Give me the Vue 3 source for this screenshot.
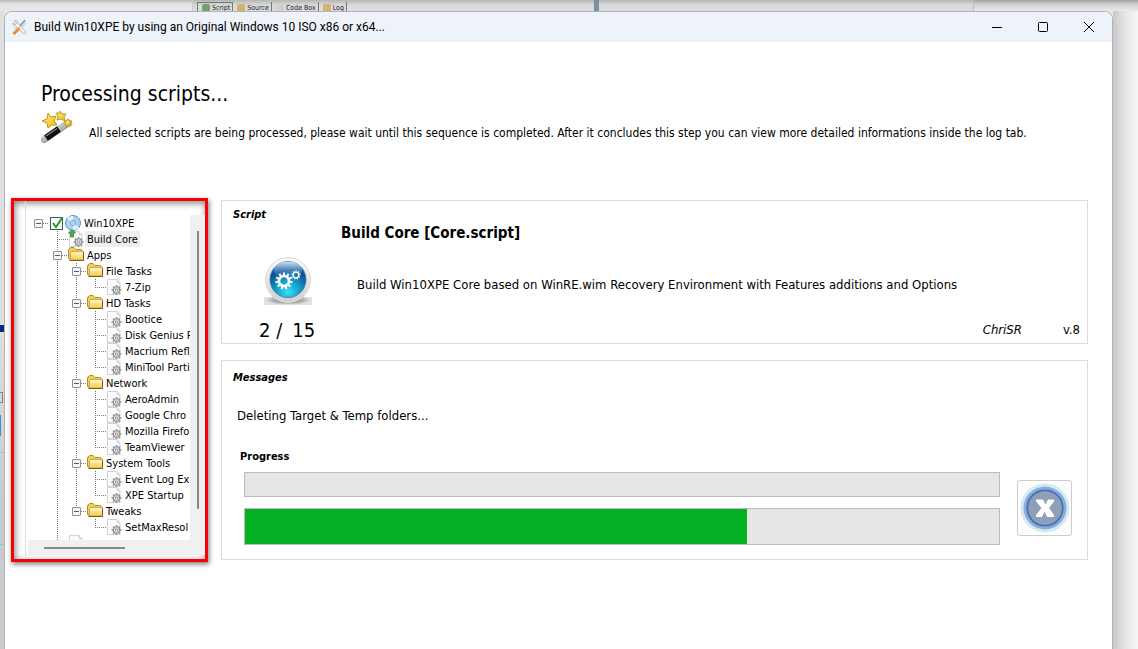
<script setup>
const T = (depth, kind, label, opt = {}) => ({ depth, kind, label, ...opt })
const nodes = [
  T(0, 'disc', 'Win10XPE', { checked: true, box: true }),
  T(1, 'core', 'Build Core', { selected: true, rails: [1] }),
  T(1, 'folder', 'Apps', { box: true, rails: [1] }),
  T(2, 'folder', 'File Tasks', { box: true, rails: [1, 2] }),
  T(3, 'file', '7-Zip', { rails: [1, 2], last: true }),
  T(2, 'folder', 'HD Tasks', { box: true, rails: [1, 2] }),
  T(3, 'file', 'Bootice', { rails: [1, 2, 3] }),
  T(3, 'file', 'Disk Genius P', { rails: [1, 2, 3] }),
  T(3, 'file', 'Macrium Refl', { rails: [1, 2, 3] }),
  T(3, 'file', 'MiniTool Parti', { rails: [1, 2], last: true }),
  T(2, 'folder', 'Network', { box: true, rails: [1, 2] }),
  T(3, 'file', 'AeroAdmin', { rails: [1, 2, 3] }),
  T(3, 'file', 'Google Chro', { rails: [1, 2, 3] }),
  T(3, 'file', 'Mozilla Firefo', { rails: [1, 2, 3] }),
  T(3, 'file', 'TeamViewer', { rails: [1, 2], last: true }),
  T(2, 'folder', 'System Tools', { box: true, rails: [1, 2] }),
  T(3, 'file', 'Event Log Ex', { rails: [1, 2, 3] }),
  T(3, 'file', 'XPE Startup', { rails: [1, 2], last: true }),
  T(2, 'folder', 'Tweaks', { box: true, rails: [1], last: true }),
  T(3, 'file', 'SetMaxResol', { rails: [1], last: true }),
  T(1, 'file', '', { rails: [1] }),
]
const teeth = n => Array.from({ length: n }, (_, i) => (i * 360) / n)
const overall = 502 / 754 * 100
</script>

<template>
  <div class="desktop">
    <div class="backdrop">
      <div class="back-left"></div>
      <div class="back-tabs">
        <span class="tab active"><i class="sq green"></i>Script</span>
        <span class="tab"><i class="sq gold"></i>Source</span>
        <span class="tab"><i class="sq pale"></i>Code Box</span>
        <span class="tab"><i class="sq gold"></i>Log</span>
      </div>
      <div class="back-gap"></div>
      <div class="back-split"></div>
      <div class="back-mid"></div>
      <div class="back-right"></div>
    </div>
    <div class="edge" aria-hidden="true">
      <i class="e1"></i><i class="e2"></i><i class="e3"></i><i class="e4"></i>
    </div>

    <main class="window">
      <header class="titlebar">
        <svg class="appicon" viewBox="0 0 16 16">
          <path d="M2 1l6 6 5-6 2 3-4 5 4 5-2 1-5-4-4 3-3-2 4-5-4-4z" fill="#dcdcdc" />
          <path d="M3 1l2 3-2 2-2-2c0 3 2 4 4 4l7 7 2-2-7-7c0-3-2-5-4-5z" fill="#f3f3f3" stroke="#a9a9a9" stroke-width=".7" />
          <path d="M8 7l5-6" stroke="#8d969b" stroke-width="1.4" />
          <path d="M7.500 9l-6 6" stroke="#e08a25" stroke-width="2.600" />
          <path d="M7 8.500L2 13" stroke="#f9bd66" stroke-width=".8" />
        </svg>
        <span class="title">Build Win10XPE by using an Original Windows 10 ISO x86 or x64...</span>
        <button class="winbtn" aria-label="Minimize"><svg viewBox="0 0 12 12"><path d="M1 6.500h10" /></svg></button>
        <button class="winbtn" aria-label="Maximize"><svg viewBox="0 0 12 12"><rect x="1.500" y="1.500" width="9" height="9" rx="1" /></svg></button>
        <button class="winbtn" aria-label="Close"><svg viewBox="0 0 12 12"><path d="M1 1l10 10M11 1L1 11" /></svg></button>
      </header>

      <section class="intro">
        <h1>Processing scripts...</h1>
        <div class="intro-row">
          <svg class="wand" viewBox="0 0 32 32">
            <defs>
              <linearGradient id="wand-tip" x1="0" y1="0" x2="1" y2="1"><stop offset="0" stop-color="#fff" /><stop offset="1" stop-color="#777" /></linearGradient>
              <linearGradient id="star" x1="0" y1="0" x2="1" y2="1"><stop offset="0" stop-color="#fff27a" /><stop offset="1" stop-color="#f0b90c" /></linearGradient>
            </defs>
            <path d="M4 30L30 13" stroke="#ccc" stroke-width="3" stroke-linecap="round" />
            <path d="M3.500 28.500L27 12" stroke="#999" stroke-width="7" stroke-linecap="round" />
            <path d="M3.500 28L27 11.500" stroke="url(#wand-tip)" stroke-width="6" stroke-linecap="round" />
            <path d="M5 27L18 18" stroke="#111" stroke-width="6.500" />
            <path d="M5 25L16 17.500" stroke="#888" stroke-width="1.200" />
            <g fill="url(#star)" stroke="#b98d12" stroke-width=".9" stroke-linejoin="round">
              <path d="M7 2l3 4 5-1-2 5 3 4-5 0-4 3-1-5-5-2 5-2z" />
              <path d="M19 0l2 3 4 0-2 3 1 4-4-2-4 1 1-4-2-3 4 0z" />
              <path d="M27 8l1 2 3 0-2 2 1 3-3-1-2 2 0-3-2-2 2-1z" />
            </g>
          </svg>
          <p>All selected scripts are being processed, please wait until this sequence is completed. After it concludes this step you can view more detailed informations inside the log tab.</p>
        </div>
      </section>

      <div class="body">
        <aside class="highlight">
          <div class="treebox">
            <div class="tree-view">
              <ul class="tree">
                <li v-for="(n, i) in nodes" :key="i" :class="['node', 'd' + n.depth]">
                  <i v-for="r in n.rails || []" :key="r" :class="['rail', 'r' + r]"></i>
                  <i v-if="n.last" :class="['rail', 'half', 'r' + n.depth]"></i>
                  <button v-if="n.box" class="expander" :aria-label="'Collapse ' + n.label"></button>
                  <i :class="['dash', { long: !n.box }]"></i>
                  <label v-if="n.checked" class="check">
                    <input type="checkbox" checked :aria-label="n.label" />
                    <svg viewBox="0 0 13 13"><path d="M3 6l3 4 6-9" /></svg>
                  </label>
                  <svg v-if="n.kind === 'disc'" class="ico" viewBox="0 0 16 16">
                    <circle cx="8" cy="8" r="7.500" fill="#a9d3f5" stroke="#5a93c9" />
                    <path d="M8 8L2 3A8 8 0 0 1 8 1zM8 8l6 5a8 8 0 0 1-6 2z" fill="#e4f4ff" />
                    <circle cx="8" cy="8" r="2.500" fill="#e9f5fd" stroke="#6f9fc9" />
                    <circle cx="8" cy="8" r="1" fill="#fff" stroke="#6f9fc9" stroke-width=".6" />
                  </svg>
                  <svg v-else-if="n.kind === 'folder'" class="ico" viewBox="0 0 16 16">
                    <defs>
                      <linearGradient id="folder-face" x1="0" y1="0" x2="0" y2="1"><stop offset="0" stop-color="#fff8cf" /><stop offset="1" stop-color="#f3cb4e" /></linearGradient>
                    </defs>
                    <path d="M.500 11.500V3L2.500.500h3.500L8 2.500h5.500l1 1.500v9H2.500z" fill="#f1cc5c" stroke="#b58d2e" />
                    <path d="M2.500 13V5.500L3.500 4.500h12v8.500z" fill="url(#folder-face)" stroke="#d3a93c" />
                    <path d="M1.500 13.500h14V5" fill="none" stroke="#7c5e1b" />
                  </svg>
                  <svg v-else class="ico" viewBox="0 0 16 16">
                    <path d="M1.500.5H11l3 3v12H1.500z" fill="#fbfbfb" stroke="#d3d3d3" />
                    <path d="M11 .5v3h3" fill="#eee" stroke="#ccc" />
                    <g transform="translate(10.500 11)" stroke="#8f8f8f">
                      <path v-for="a in teeth(8)" :key="a" d="M0-3.500V-5" stroke-width="1.500" :transform="`rotate(${a})`" />
                      <circle r="3.200" fill="#d9d9d9" stroke-width="1.100" />
                      <circle r="1.200" fill="#fff" stroke-width=".9" />
                    </g>
                    <path v-if="n.kind === 'core'" d="M4-1.500L7.500 2H5.500v4h-3V2h-2z" fill="#4fae4a" stroke="#2f7d30" stroke-width=".7" />
                  </svg>
                  <span :class="['label', { selected: n.selected }]">{{ n.label }}</span>
                </li>
              </ul>
            </div>
            <div class="vscroll"><i></i></div>
            <div class="hscroll"><i></i></div>
          </div>
        </aside>

        <div class="panels">
          <section class="panel script">
            <h2>Script</h2>
            <h3>Build Core [Core.script]</h3>
            <div class="script-row">
              <svg class="gear-icon" viewBox="0 0 48 48">
                <defs>
                  <radialGradient id="orb" cx=".5" cy=".85" r=".85"><stop offset="0" stop-color="#35e2f5" /><stop offset=".4" stop-color="#169bc9" /><stop offset=".75" stop-color="#0b4f93" /><stop offset="1" stop-color="#2c6fae" /></radialGradient>
                  <linearGradient id="ring" x1="0" y1="0" x2="0" y2="1"><stop offset="0" stop-color="#fafafa" /><stop offset="1" stop-color="#cfd1d2" /></linearGradient>
                  <linearGradient id="gloss" x1="0" y1="0" x2="0" y2="1"><stop offset="0" stop-color="#cfe2f3" /><stop offset="1" stop-color="#3b7db8" stop-opacity=".1" /></linearGradient>
                  <radialGradient id="shade"><stop offset="0" stop-color="#555" /><stop offset="1" stop-color="#e2e2e2" /></radialGradient>
                </defs>
                <rect y="40" width="48" height="8" fill="#e2e2e2" />
                <ellipse cx="24" cy="43" rx="23" ry="5" fill="url(#shade)" />
                <circle cx="24" cy="23" r="22.500" fill="url(#ring)" stroke="#dcdcdc" />
                <circle cx="24" cy="22.500" r="18" fill="url(#orb)" stroke="#527f9e" />
                <ellipse cx="24" cy="13" rx="14" ry="8.500" fill="url(#gloss)" />
                <g transform="translate(20 24)" stroke="#fff">
                  <path v-for="a in teeth(11)" :key="a" d="M0-5.500V-8.500" stroke-width="2" :transform="`rotate(${a})`" />
                  <circle r="5" fill="none" stroke-width="2.600" />
                </g>
                <g transform="translate(32 18)" stroke="#fff">
                  <path v-for="a in teeth(9)" :key="a" d="M0-3V-4.600" stroke-width="1.300" :transform="`rotate(${a})`" />
                  <circle r="2.800" fill="none" stroke-width="1.300" />
                </g>
              </svg>
              <p>Build Win10XPE Core based on WinRE.wim Recovery Environment with Features additions and Options</p>
            </div>
            <div class="script-foot">
              <span class="count"><span>2 /</span><span>15</span></span>
              <span class="author">ChriSR</span>
              <span class="version">v.8</span>
            </div>
          </section>

          <section class="panel messages">
            <h2>Messages</h2>
            <p class="message">Deleting Target &amp; Temp folders...</p>
            <h4>Progress</h4>
            <div class="progress-row">
              <div class="bars">
                <div class="bar small" role="progressbar" aria-label="Current script" aria-valuenow="0"></div>
                <div class="bar" role="progressbar" aria-label="Overall" :aria-valuenow="Math.round(overall)">
                  <div class="fill" :style="{ width: overall + '%' }"></div>
                </div>
              </div>
              <button class="cancel" aria-label="Cancel">
                <svg viewBox="0 0 50 50">
                  <circle cx="25" cy="25" r="24.500" fill="#d2eaf1" />
                  <circle cx="25" cy="25" r="21.500" fill="#8fabd8" />
                  <circle cx="25" cy="25" r="17.700" fill="#8f9fb8" stroke="#3f74bc" stroke-width="1.800" />
                  <path d="M16 16.500h7l2.500 5 2.500-5h6v2l-5 6.500 5 7v2h-7l-2.500-5.500-2.500 5.500h-6v-2l5.500-7-5.500-6.500z" fill="#fff" />
                </svg>
              </button>
            </div>
          </section>
        </div>
      </div>
    </main>
    <div class="rightshade"></div>
  </div>
</template>

<style>
html, body { margin: 0; height: 100%; overflow: hidden; }
#app { height: 100%; }
</style>

<style scoped>
* { box-sizing: border-box; }
h1, h2, h3, h4, p, ul { margin: 0; padding: 0; font-weight: normal; }
button { padding: 0; border: 0; background: none; font: inherit; }
svg { display: block; overflow: visible; flex: none; }
.desktop {
  height: 100vh; display: grid; grid-template: 11px 1fr / 4px 1fr 25px; overflow: hidden;
  font: 12px/16px "DejaVu Sans Condensed", "DejaVu Sans", sans-serif; color: #000; background: #ececec;
}
.backdrop {
  grid-column: 1 / -1; display: flex; height: 20px;
  background: linear-gradient(#b5b5b5, #d9d9d9 5px, #e4e4e4); font-size: 7px; line-height: 9px; color: #222;
}
.back-left { width: 193px; border-right: 1px solid #ccc; background: linear-gradient(#b9b9b9, #e4e4e4 4px, #eee); }
.back-tabs { display: flex; width: 153px; padding: 2px 0 0 4px; }
.tab { display: flex; gap: 2px; padding: 2px 2px 0 4px; border-right: 1px solid #777; white-space: nowrap; }
.tab.active { border: 1px solid #777; border-bottom: 0; padding-top: 1px; }
.sq { width: 8px; height: 8px; border-radius: 2px; }
.green { background: #76a070; }
.gold { background: #d0b271; }
.pale { background: #d0d0d0; }
.back-gap { flex: 248 1 0; }
.back-split { width: 5px; background: #7592aa; border-left: 1px solid #888; }
.back-mid { flex: 375 1 0; }
.back-right { width: 165px; border-left: 1px solid #bbb; background: linear-gradient(#a0a0a0, #cecece 4px, #eee 12px); }
.edge { background: linear-gradient(#e0e0e0 300px, #c8ccd0 480px); grid-row: 2; grid-column: 1; display: flex; flex-direction: column; }
.edge i { height: 7px; }
.e1 { margin-top: 314px; background: #0a2a80; }
.e2 { margin: 60px 1px 0 0; border: 1px solid #888; border-left: 0; }
.edge .e2 { height: 11px; }
.e3 { margin: 12px 3px 0 0; background: #3d8fd8; }
.edge .e3 { height: 21px; margin-right: 3px; }
.e4 { margin-top: 16px; border-top: 1px solid #9fc3d6; border-bottom: 1px solid #9fc3d6; }
.edge .e4 { height: 93px; }
.window {
  grid-row: 2; grid-column: 2; z-index: 1; display: flex; flex-direction: column; min-width: 0;
  background: #fff; border: 1px solid #b0b2b5; border-bottom: 0; border-radius: 8px 8px 0 0; overflow: hidden;
}
.rightshade { grid-row: 2; grid-column: 3; background: linear-gradient(90deg, #c8c8c8, #e2e2e2 10px, #f6f6f6); }
.titlebar { display: flex; align-items: center; height: 30px; padding-left: 7px; background: #eef3f9; font-family: Roboto, "Noto Sans", sans-serif; }
.appicon { width: 16px; height: 16px; }
.title { flex: 1; margin-left: 6px; white-space: nowrap; }
.winbtn { width: 46px; height: 30px; display: grid; place-items: center; }
.winbtn svg { width: 12px; height: 12px; fill: none; stroke: #000; stroke-width: 1; }
.intro { padding: 39px 36px 0; height: 157px; flex: none; }
h1 { font-size: 21px; line-height: 26px; }
.intro-row { display: flex; align-items: flex-start; gap: 16px; margin-top: 4px; }
.wand { width: 32px; height: 32px; }
.intro-row p { margin-top: 14px; white-space: nowrap; }
.body { display: flex; align-items: flex-start; gap: 13px; padding: 0 24px 0 6px; }
.highlight {
  width: 197px; height: 364px; flex: none; border: 3px solid #f80008; padding-left: 11px; margin-top: -1px;
  box-shadow: 1px 2px 5px rgba(0,0,0,.55), inset 1px 2px 7px rgba(0,0,0,.5);
}
.treebox { height: 355px; border-left: 1px solid #ddd; padding: 14px 0 0 2px; display: grid; grid-template: 325px 15px / 162px 1fr; }
.tree-view { overflow: hidden; }
.tree { list-style: none; font-size: 11px; }
.node { position: relative; display: flex; align-items: center; height: 16px; white-space: nowrap; }
.d0 { padding-left: 6px; }
.d1 { padding-left: 25px; }
.d2 { padding-left: 44px; }
.d3 { padding-left: 63px; }
.rail { position: absolute; top: 0; width: 1px; height: 16px; background: repeating-linear-gradient(#777 0 1px, #fff 1px 2px); }
.rail.half { height: 8px; }
.r1 { left: 29px; }
.r2 { left: 48px; }
.r3 { left: 67px; }
.expander { position: relative; flex: none; width: 9px; height: 9px; border: 1px solid #909090; border-radius: 1px; background: linear-gradient(#3b62a8, #3b62a8) center / 5px 1px no-repeat #f5f5f5; }
.dash { flex: none; width: 6px; height: 1px; background: repeating-linear-gradient(90deg, #777 0 1px, #fff 1px 2px); }
.dash.long { width: 11px; margin-left: 4px; }
.check { position: relative; flex: none; width: 13px; height: 13px; margin: 0 2px; }
.d0 .dash { width: 5px; }
.check input { appearance: none; display: block; width: 13px; height: 13px; margin: 0; border: 1px solid #456; background: #f8f8f8; }
.check svg { position: absolute; inset: 0; fill: none; stroke: #21a121; stroke-width: 2; }
.ico { width: 16px; height: 16px; }
.label { margin-left: 1px; padding: 1px 2px 0; line-height: 15px; }
.selected { background: #eee; }
.vscroll { background: #f0f0f0; display: flex; justify-content: center; padding: 16px 0 31px; }
.vscroll i { width: 2px; background: #888; }
.hscroll { grid-column: 1 / -1; background: #f0f0f0; padding: 7px 0 0 16px; }
.hscroll i { display: block; width: 81px; height: 2px; background: #888; }
.panels { flex: 1; min-width: 0; display: flex; flex-direction: column; gap: 16px; padding-top: 1px; }
.panel { border: 1px solid #dcdcdc; }
.script { height: 144px; }
.messages { height: 200px; }
h2 { font: italic bold 11px/16px "DejaVu Sans Condensed", sans-serif; padding: 6px 0 0 11px; }
.messages h2 { padding-top: 9px; }
h3 { font-size: 15px; line-height: 20px; font-weight: bold; padding-left: 119px; }
.script-row { display: flex; align-items: center; gap: 45px; padding: 14px 0 0 42px; }
.gear-icon { width: 48px; height: 48px; }
.script-row p { padding-top: 8px; }
.script-row p, .message { font-size: 13px; white-space: nowrap; }
.script-foot { display: flex; align-items: center; margin-top: 13px; padding: 0 7px 0 37px; font-size: 13px; }
.count { flex: 1; display: flex; gap: 10px; font-size: 20px; line-height: 24px; }
.author { font-style: italic; margin-right: 41px; }
.message { padding: 22px 0 0 15px; }
h4 { font-size: 11px; font-weight: bold; padding: 25px 0 0 18px; }
.progress-row { display: flex; align-items: flex-start; gap: 17px; padding: 7px 15px 0 22px; }
.bars { flex: 1; display: flex; flex-direction: column; gap: 11px; }
.bar { height: 37px; border: 1px solid #bcbcbc; background: #e6e6e6; }
.bar.small { height: 25px; }
.fill { height: 100%; background: #06b025; }
.cancel { width: 55px; height: 56px; margin-top: 8px; border: 1px solid #ccc; border-radius: 3px; background: #fdfdfd; display: grid; place-items: center; }
.cancel svg { width: 50px; height: 50px; }
</style>
